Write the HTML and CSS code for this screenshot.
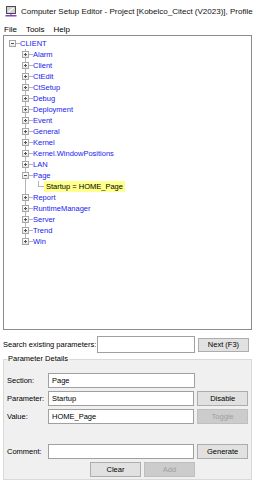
FILE: index.html
```html
<!DOCTYPE html>
<html lang="en">

<head>
    <meta charset="UTF-8" />
    <title>Computer Setup Editor</title>
    <link rel="stylesheet" href="styles.css">
</head>

<body>
    <div class="titlebar">
        <svg class="app-icon" width="12" height="11" viewBox="0 0 12 11">
            <rect x="1.5" y="0.5" width="9" height="7" fill="#cfcfcf" stroke="#4a4a4a" />
            <path d="M3.5 6 L8.5 2" fill="none" stroke="#fff" stroke-width="1.2" />
            <path d="M6 7.5 V9" stroke="#4a4a4a" />
            <rect x="0.5" y="9" width="11" height="1.5" fill="#8a3fc8" />
        </svg>
        <span class="title">Computer Setup Editor - Project [Kobelco_Citect (V2023)], Profile</span>
    </div>
    <div class="menubar">
        <span>File</span>
        <span>Tools</span>
        <span>Help</span>
    </div>

    <div class="tree-panel">
        <ul class="tree">
            <li class="root">
                <div class="row"><span class="box"></span><span class="dash"></span><span class="text">CLIENT</span></div>
                <ul class="branch">
                    <li><div class="row"><span class="box closed"></span><span class="dash"></span><span class="text">Alarm</span></div></li>
                    <li><div class="row"><span class="box closed"></span><span class="dash"></span><span class="text">Client</span></div></li>
                    <li><div class="row"><span class="box closed"></span><span class="dash"></span><span class="text">CtEdit</span></div></li>
                    <li><div class="row"><span class="box closed"></span><span class="dash"></span><span class="text">CtSetup</span></div></li>
                    <li><div class="row"><span class="box closed"></span><span class="dash"></span><span class="text">Debug</span></div></li>
                    <li><div class="row"><span class="box closed"></span><span class="dash"></span><span class="text">Deployment</span></div></li>
                    <li><div class="row"><span class="box closed"></span><span class="dash"></span><span class="text">Event</span></div></li>
                    <li><div class="row"><span class="box closed"></span><span class="dash"></span><span class="text">General</span></div></li>
                    <li><div class="row"><span class="box closed"></span><span class="dash"></span><span class="text">Kernel</span></div></li>
                    <li><div class="row"><span class="box closed"></span><span class="dash"></span><span class="text">Kernel.WindowPositions</span></div></li>
                    <li><div class="row"><span class="box closed"></span><span class="dash"></span><span class="text">LAN</span></div></li>
                    <li>
                        <div class="row"><span class="box"></span><span class="dash"></span><span class="text">Page</span></div>
                        <ul class="leaves">
                            <li><div class="row"><span class="elbow"></span><span class="text hl">Startup = HOME_Page</span></div></li>
                        </ul>
                    </li>
                    <li><div class="row"><span class="box closed"></span><span class="dash"></span><span class="text">Report</span></div></li>
                    <li><div class="row"><span class="box closed"></span><span class="dash"></span><span class="text">RuntimeManager</span></div></li>
                    <li><div class="row"><span class="box closed"></span><span class="dash"></span><span class="text">Server</span></div></li>
                    <li><div class="row"><span class="box closed"></span><span class="dash"></span><span class="text">Trend</span></div></li>
                    <li><div class="row"><span class="box closed"></span><span class="dash"></span><span class="text">Win</span></div></li>
                </ul>
            </li>
        </ul>
    </div>

    <div class="search">
        <label>Search existing parameters:</label>
        <input type="text" value="">
        <button>Next (F3)</button>
    </div>

    <fieldset class="details">
        <legend>Parameter Details</legend>
        <div class="fields">
            <div class="field">
                <label>Section:</label>
                <input type="text" value="Page">
            </div>
            <div class="field">
                <label>Parameter:</label>
                <input type="text" value="Startup">
                <button>Disable</button>
            </div>
            <div class="field">
                <label>Value:</label>
                <input type="text" value="HOME_Page">
                <button disabled>Toggle</button>
            </div>
            <div class="field comment">
                <label>Comment:</label>
                <input type="text" value="">
                <button>Generate</button>
            </div>
            <div class="field actions">
                <button>Clear</button>
                <button disabled>Add</button>
            </div>
        </div>
    </fieldset>
</body>

</html>
```

FILE: styles.css
```css
* {
    box-sizing: border-box;
}

html,
body {
    margin: 0;
}

body {
    width: 257px;
    height: 480px;
    overflow: hidden;
    background: #fff;
    font-family: "Liberation Sans", Arial, sans-serif;
    font-size: 7.5px;
    color: #000;
}

.titlebar {
    height: 23px;
    display: flex;
    align-items: center;
    gap: 4px;
    padding-left: 5px;
    white-space: nowrap;
    overflow: hidden;
}

.app-icon {
    flex: none;
}

.title {
    font-size: 8px;
    color: #111;
}

.menubar {
    height: 12px;
    display: flex;
    align-items: center;
    gap: 9px;
    padding-left: 4px;
    font-size: 8px;
}

/* tree view */
.tree-panel {
    margin: 0 5px 0 3px;
    height: 295px;
    border: 1px solid #8c8c8c;
    background: #fff;
    padding-top: 2px;
    overflow: hidden;
}

.tree,
.tree ul {
    list-style: none;
    margin: 0;
    padding: 0;
}

.tree li {
    position: relative;
}

.row {
    height: 11px;
    display: flex;
    align-items: center;
    line-height: 11px;
    white-space: nowrap;
}

.root>.row {
    padding-left: 5px;
}

.branch>li>.row {
    padding-left: 18px;
}

.leaves>li>.row {
    padding-left: 34px;
}

.box {
    position: relative;
    z-index: 1;
    flex: none;
    width: 7px;
    height: 7px;
    border: 1px solid #a6a6a6;
    background: linear-gradient(#fff, #e6e6e6);
}

.box::before {
    content: "";
    position: absolute;
    left: 1px;
    top: 2px;
    width: 3px;
    height: 1px;
    background: #555;
}

.box.closed::after {
    content: "";
    position: absolute;
    left: 2px;
    top: 1px;
    width: 1px;
    height: 3px;
    background: #555;
}

.dash {
    flex: none;
    width: 4px;
    height: 1px;
    background: #b4b4b4;
}

.branch>li::before {
    content: "";
    position: absolute;
    left: 21px;
    top: 0;
    bottom: 0;
    width: 1px;
    background: #b4b4b4;
}

.branch>li:last-child::before {
    bottom: auto;
    height: 6px;
}

.elbow {
    flex: none;
    align-self: flex-start;
    width: 6px;
    height: 6px;
    border-left: 1px solid #b4b4b4;
    border-bottom: 1px solid #b4b4b4;
}

.text {
    color: #1a1af0;
}

.hl {
    color: #000;
    background: #ffff8c;
    padding: 0 2px;
}

/* form */
input {
    height: 15px;
    margin: 0;
    padding: 0 3px;
    border: 1px solid #a0a0a0;
    background: #fff;
    font: inherit;
    color: #000;
}

button {
    height: 15px;
    margin: 0;
    padding: 0;
    border: 1px solid #adadad;
    background: #e1e1e1;
    font: inherit;
    color: #000;
}

button:disabled {
    background: #cccccc;
    border-color: #bfbfbf;
    color: #a0a0a0;
}

.search {
    display: flex;
    align-items: center;
    height: 17px;
    margin-top: 6px;
    padding-left: 3px;
}

.search label {
    flex: none;
    width: 94px;
    white-space: nowrap;
}

.search input {
    width: 98px;
    height: 17px;
}

.search button {
    width: 51px;
    height: 14px;
    margin-left: 3px;
}

.details {
    margin: 1px 5px 0 3px;
    padding: 9px 3px 2px;
    min-width: 0;
    border: 1px solid #d9d9d9;
    background: #f0f0f0;
}

.details legend {
    padding: 0 1px;
    line-height: 10px;
}

.fields {
    display: flex;
    flex-direction: column;
    gap: 3px;
}

.field {
    display: flex;
    align-items: center;
    gap: 3px;
    height: 15px;
}

.field label {
    flex: none;
    width: 38px;
    white-space: nowrap;
}

.field input {
    width: 147px;
}

.field button {
    width: 51px;
}

.comment {
    margin-top: 17px;
}

.actions {
    width: 188px;
    justify-content: flex-end;
}
```
